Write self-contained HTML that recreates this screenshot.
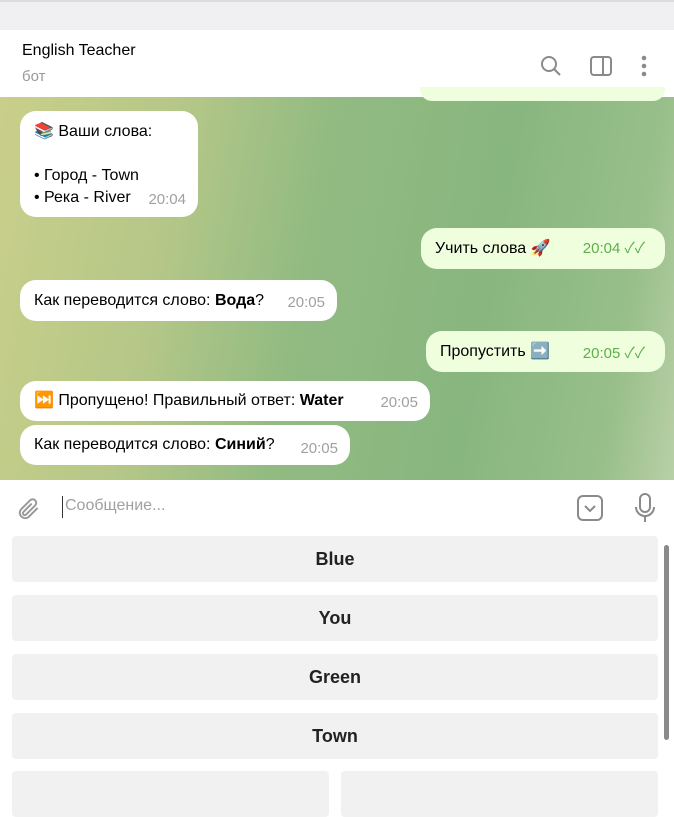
<!DOCTYPE html><html><head><meta charset="utf-8"><style>
*{box-sizing:border-box;margin:0;padding:0}
body{width:674px;height:780px;overflow:hidden;font-family:"Liberation Sans","Noto Sans CJK SC",sans-serif;background:#fff;position:relative;font-size:16px;color:#000}
.top{position:absolute;left:0;top:0;width:674px;height:30px;background:#f0f0f2;border-top:2px solid #dcdce0}
.hdr{position:absolute;left:0;top:30px;width:674px;height:67px;background:#fff}
.chat{position:absolute;left:0;top:97px;width:674px;height:383px;background:linear-gradient(100deg,#c9cf8a 0%,#b5c788 25%,#92bb82 45%,#88b67f 70%,#98bf8a 90%,#b9d0a6 100%)}
.b{position:absolute;background:#fff;border-radius:16px;padding:0 14px;line-height:22px;white-space:nowrap}
.o{background:#effedd}
.t{color:#a0a0a0;font-size:15px;position:absolute;right:12px;bottom:6px}
.o .t{color:#5fae4d}
.inp{position:absolute;left:0;top:480px;width:674px;height:55px;background:#fff}
.btn{position:absolute;left:12px;width:646px;height:46px;background:#f1f1f1;border-radius:4px;text-align:center;line-height:46px;font-size:18px;color:#222;font-weight:bold}
</style></head><body>
<div class="top"></div>
<div class="hdr">
<div style="position:absolute;left:22px;top:12px;font-size:16px">English Teacher</div>
<div style="position:absolute;left:22px;top:38px;font-size:15px;color:#999">бот</div>
<svg style="position:absolute;left:539px;top:24px" width="24" height="24" viewBox="0 0 24 24" fill="none" stroke="#8a8a8a" stroke-width="2"><circle cx="10" cy="10" r="7"/><path d="M15 15l6 6"/></svg>
<svg style="position:absolute;left:589px;top:24px" width="24" height="24" viewBox="0 0 24 24" fill="none" stroke="#8a8a8a" stroke-width="2"><rect x="2" y="3" width="20" height="18" rx="3"/><path d="M14 3v18"/></svg>
<svg style="position:absolute;left:638px;top:24px" width="12" height="24"><circle cx="6" cy="4" r="2.3" fill="#8a8a8a"/><circle cx="6" cy="12" r="2.3" fill="#8a8a8a"/><circle cx="6" cy="20" r="2.3" fill="#8a8a8a"/></svg>
</div>
<div class="chat">
<div class="b o" style="left:420px;top:-10px;width:245px;height:14px;border-radius:0 0 12px 12px"></div>
<div class="b" style="left:20px;top:14px;width:178px;height:106px;padding-top:10px">📚 Ваши слова:<br><br>• Город - Town<br>• Река - River<span class="t" style="bottom:6px">20:04</span></div>
<div class="b o" style="left:421px;top:131px;width:244px;height:41px;line-height:41px">Учить слова 🚀<span class="t" style="bottom:0;line-height:41px;right:20px">20:04 ✓✓</span></div>
<div class="b" style="left:20px;top:183px;width:317px;height:41px;line-height:41px">Как переводится слово: <b>Вода</b>?<span class="t" style="bottom:-2px;line-height:41px">20:05</span></div>
<div class="b o" style="left:426px;top:234px;width:239px;height:41px;line-height:41px">Пропустить ➡️<span class="t" style="bottom:-2px;line-height:41px;right:20px">20:05 ✓✓</span></div>
<div class="b" style="left:20px;top:284px;width:410px;height:40px;line-height:40px">⏭️ Пропущено! Правильный ответ: <b>Water</b><span class="t" style="bottom:-2px;line-height:40px">20:05</span></div>
<div class="b" style="left:20px;top:328px;width:330px;height:40px;line-height:40px">Как переводится слово: <b>Синий</b>?<span class="t" style="bottom:-4px;line-height:40px">20:05</span></div>
</div>
<div class="inp">
<svg style="position:absolute;left:16px;top:16px" width="26" height="26" viewBox="0 0 24 24" fill="none" stroke="#999" stroke-width="1.8"><path d="M20 11l-8.5 8.5a5 5 0 01-7-7L13 4a3.3 3.3 0 014.7 4.7L9.2 17.2a1.7 1.7 0 01-2.4-2.4L14.5 7"/></svg>
<div style="position:absolute;left:62px;top:16px;width:1px;height:22px;background:#333"></div>
<div style="position:absolute;left:65px;top:17px;color:#a0a0a0;font-size:16px">Сообщение...</div>
<svg style="position:absolute;left:576px;top:14px" width="28" height="28" viewBox="0 0 28 28" fill="none" stroke="#8a8a8a" stroke-width="2"><rect x="2" y="2" width="24" height="24" rx="5"/><path d="M9 12l5 5 5-5"/></svg>
<svg style="position:absolute;left:633px;top:12px" width="24" height="32" viewBox="0 0 24 32" fill="none" stroke="#8a8a8a" stroke-width="2"><rect x="7" y="2" width="10" height="18" rx="5"/><path d="M3 15a9 9 0 0018 0M12 24v6"/></svg>
</div>
<div class="btn" style="top:536px">Blue</div>
<div class="btn" style="top:595px">You</div>
<div class="btn" style="top:654px">Green</div>
<div class="btn" style="top:713px">Town</div>
<div class="btn" style="top:771px;width:317px"></div>
<div class="btn" style="top:771px;left:341px;width:317px"></div>
<div style="position:absolute;left:664px;top:545px;width:5px;height:195px;background:#8a8a8a;border-radius:3px"></div>
</body></html>
